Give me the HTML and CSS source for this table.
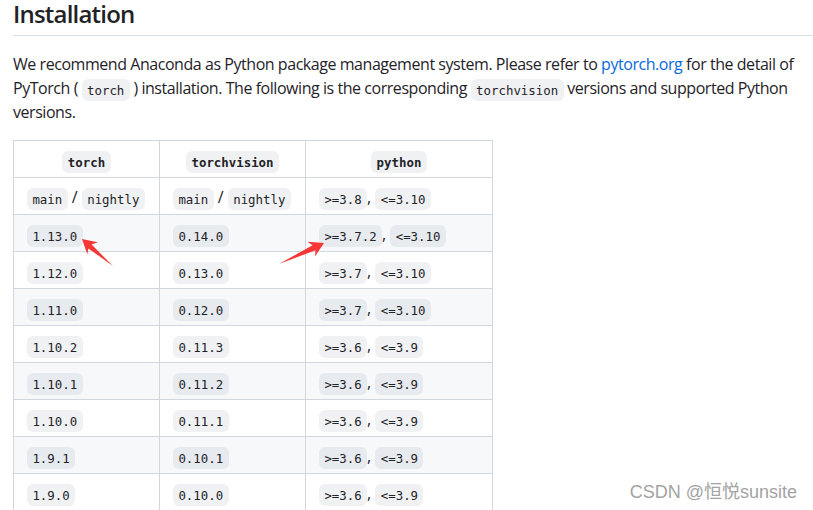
FILE: index.html
```html
<!DOCTYPE html>
<html lang="en">
<head>
<meta charset="utf-8">
<title>Installation</title>
<link rel="stylesheet" href="styles.css">
</head>
<body>
<article class="markdown-body">
  <h2 class="section-title">Installation</h2>
  <p class="intro">We recommend Anaconda as Python package management system. Please refer to <a href="#" class="link">pytorch.org</a> for the detail of PyTorch ( <code>torch</code> ) installation. The following is the corresponding <code>torchvision</code> versions and supported Python versions.</p>
  <table class="compat">
    <colgroup>
      <col class="col-torch">
      <col class="col-vision">
      <col class="col-python">
    </colgroup>
    <thead>
      <tr><th><code>torch</code></th><th><code>torchvision</code></th><th><code>python</code></th></tr>
    </thead>
    <tbody>
      <tr><td><code>main</code> / <code>nightly</code></td><td><code>main</code> / <code>nightly</code></td><td><code>&gt;=3.8</code>, <code>&lt;=3.10</code></td></tr>
      <tr><td><code>1.13.0</code></td><td><code>0.14.0</code></td><td><code>&gt;=3.7.2</code>, <code>&lt;=3.10</code></td></tr>
      <tr><td><code>1.12.0</code></td><td><code>0.13.0</code></td><td><code>&gt;=3.7</code>, <code>&lt;=3.10</code></td></tr>
      <tr><td><code>1.11.0</code></td><td><code>0.12.0</code></td><td><code>&gt;=3.7</code>, <code>&lt;=3.10</code></td></tr>
      <tr><td><code>1.10.2</code></td><td><code>0.11.3</code></td><td><code>&gt;=3.6</code>, <code>&lt;=3.9</code></td></tr>
      <tr><td><code>1.10.1</code></td><td><code>0.11.2</code></td><td><code>&gt;=3.6</code>, <code>&lt;=3.9</code></td></tr>
      <tr><td><code>1.10.0</code></td><td><code>0.11.1</code></td><td><code>&gt;=3.6</code>, <code>&lt;=3.9</code></td></tr>
      <tr><td><code>1.9.1</code></td><td><code>0.10.1</code></td><td><code>&gt;=3.6</code>, <code>&lt;=3.9</code></td></tr>
      <tr><td><code>1.9.0</code></td><td><code>0.10.0</code></td><td><code>&gt;=3.6</code>, <code>&lt;=3.9</code></td></tr>
    </tbody>
  </table>
</article>
<svg class="annotations" width="813" height="510" viewBox="0 0 813 510" aria-hidden="true">
  <polygon class="arrow" points="113,266 91.6,244.6 97.8,242.2 82,239 87.3,254.3 88.4,248.4"/>
  <polygon class="arrow" points="279,264 312.6,245.2 307.5,241.8 324,243 315,256.4 315.5,250.2"/>
</svg>
<div class="watermark">CSDN @恒悦sunsite</div>
</body>
</html>
```
FILE: styles.css
```css
html, body {
  margin: 0;
  padding: 0;
  background: #ffffff;
  overflow: hidden;
}

body {
  width: 813px;
  height: 510px;
  position: relative;
}

.markdown-body {
  padding-left: 13px;
  font-family: "Open Sans", "Noto Sans", sans-serif;
  font-size: 16px;
  line-height: 24px;
  color: #1f2328;
}

.section-title {
  margin: 0 0 16px 0;
  padding-bottom: 7px;
  font-size: 24px;
  font-weight: 600;
  line-height: 28px;
  letter-spacing: -0.8px;
  border-bottom: 1px solid #d8dee4;
}

.intro {
  margin: 0 0 16px 0;
  letter-spacing: -0.45px;
}

.link {
  color: #0969da;
  text-decoration: none;
}

code {
  font-family: "DejaVu Sans Mono", "Liberation Mono", monospace;
  font-size: 12.4px;
  line-height: 1;
  letter-spacing: 0;
  padding: 3.5px 5.4px;
  margin: 0;
  background: rgba(175, 184, 193, 0.2);
  border-radius: 6px;
  white-space: nowrap;
}

.compat {
  border-collapse: collapse;
  border-spacing: 0;
  table-layout: fixed;
  width: 479px;
}

.col-torch { width: 146px; }
.col-vision { width: 146px; }
.col-python { width: 187px; }

.compat th,
.compat td {
  padding: 7px 13px 5px;
  border: 1px solid #d0d7de;
  white-space: nowrap;
}

.compat th {
  font-weight: 600;
  text-align: center;
}

.compat td {
  text-align: left;
}

.compat tbody tr {
  background: #ffffff;
}

.compat tbody tr:nth-child(2n) {
  background: #f6f8fa;
}

.annotations {
  position: absolute;
  left: 0;
  top: 0;
  pointer-events: none;
}

.arrow {
  fill: #f73636;
}

.watermark {
  position: absolute;
  right: 16px;
  top: 480px;
  font-family: "Liberation Sans", "Noto Sans CJK SC", sans-serif;
  font-size: 18px;
  line-height: 24px;
  color: #a3a3a3;
}
```
